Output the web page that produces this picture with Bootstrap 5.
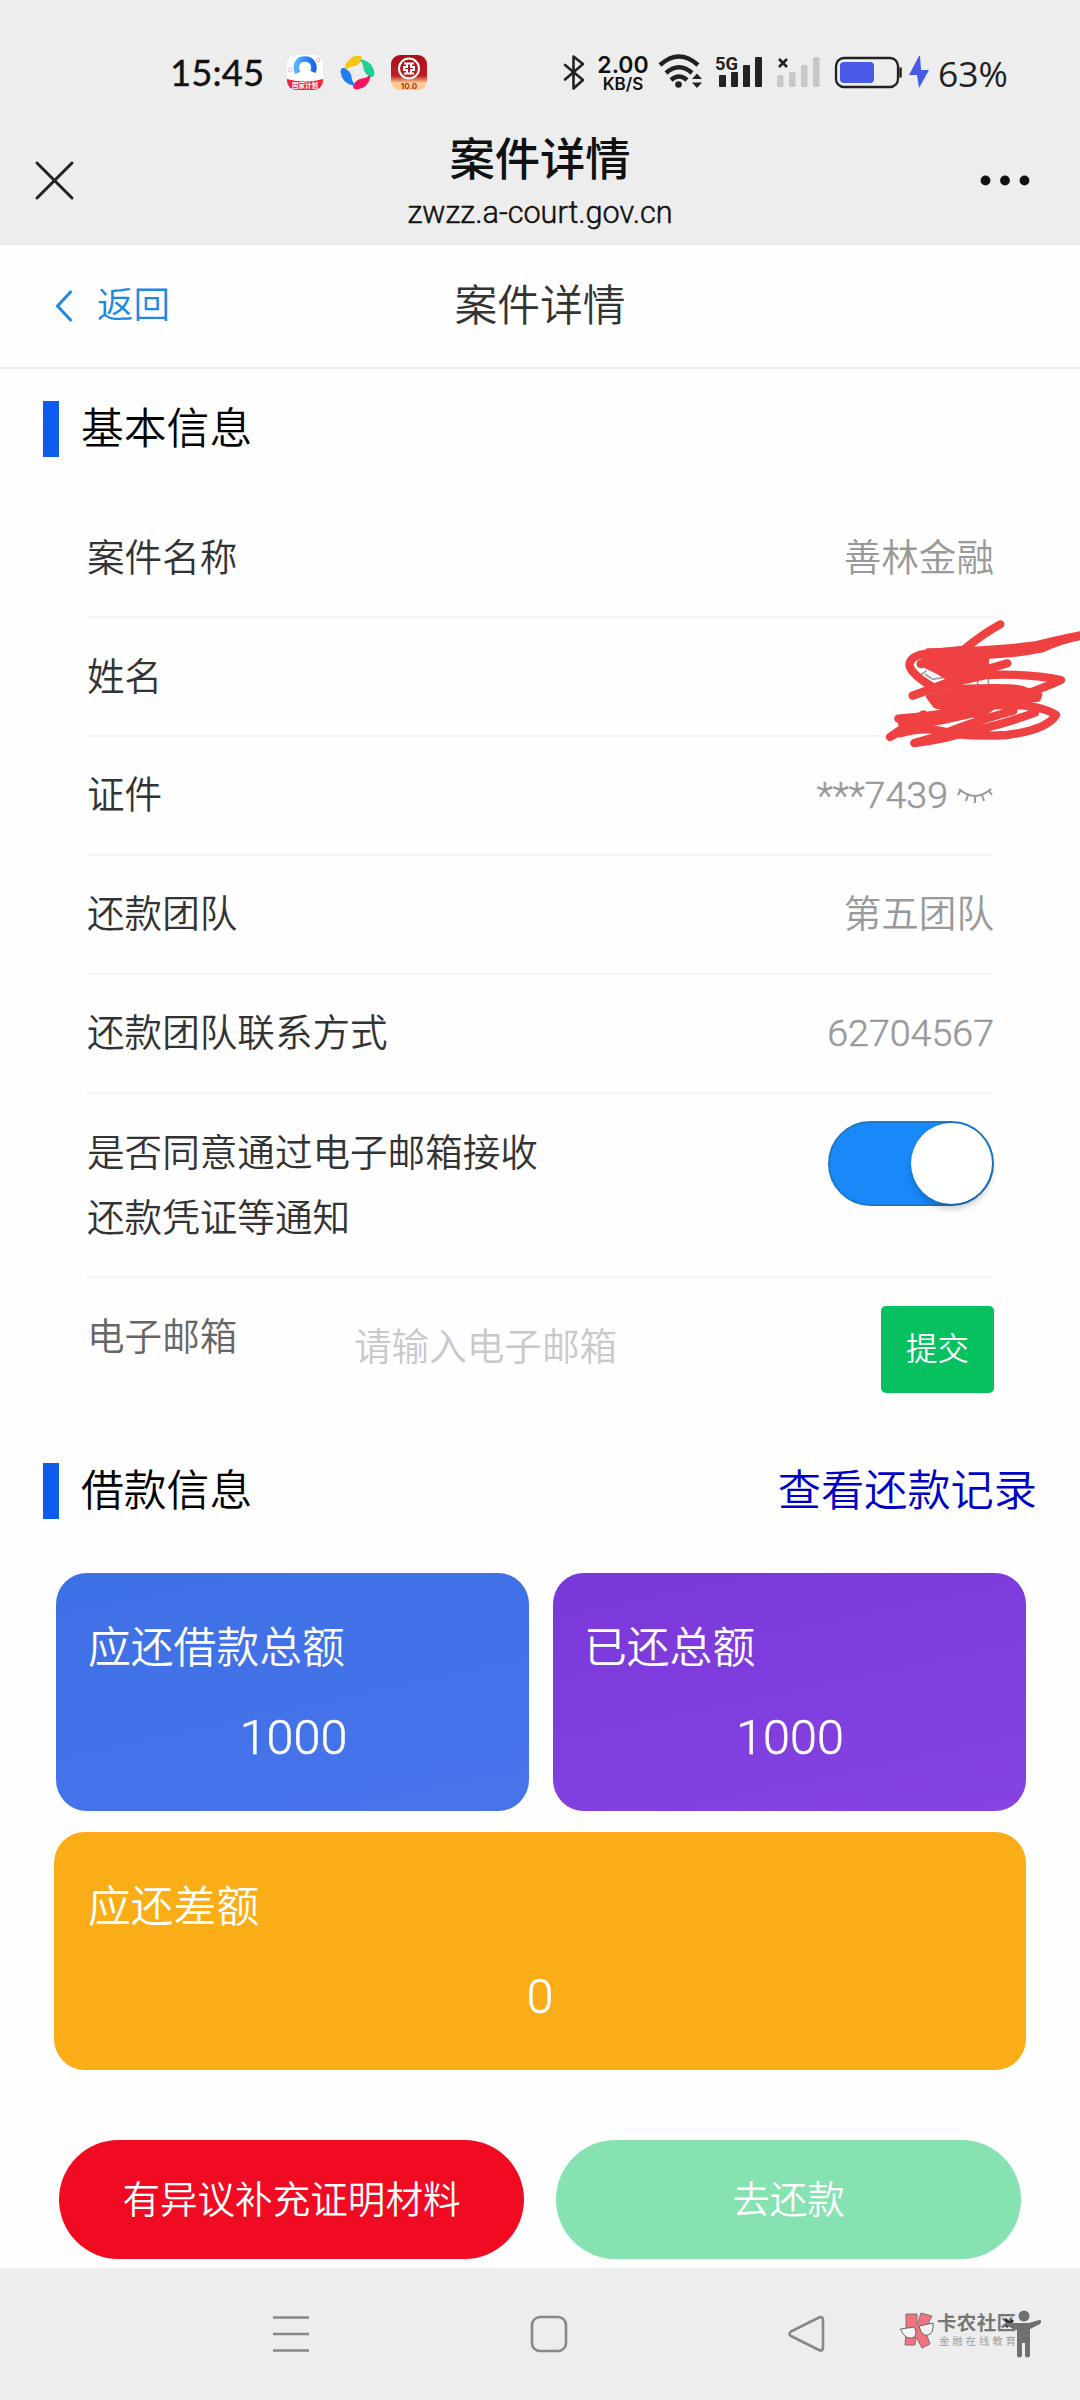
<!DOCTYPE html>
<html lang="zh-CN">
<head>
<meta charset="utf-8">
<meta name="viewport" content="width=device-width, initial-scale=1">
<title>案件详情</title>
<link href="https://cdn.jsdelivr.net/npm/bootstrap@5.3.0/dist/css/bootstrap.min.css" rel="stylesheet">
<style>
body{width:1080px;height:2400px;overflow:hidden;background:#fefefe;color:#333;font-family:"Liberation Sans","Noto Sans CJK SC",sans-serif;font-weight:350;font-size:37.6px;line-height:1.5}
svg{display:block;flex:none}
.cjk{font-family:"Noto Sans CJK SC",sans-serif}
.digits{font-family:Roboto,"Liberation Sans",sans-serif;font-weight:300;-webkit-text-stroke:.5px currentColor}
.status-bar{height:116px;background:#ededed;padding:28px 68px 0 170px}
.clock{font:400 36.5px/88px Lato,sans-serif;color:#111;letter-spacing:.1px;width:117px;-webkit-text-stroke:.4px #111}
.net-speed{font:600 23px/20px Inter,sans-serif;color:#111;width:56px;padding-top:27px}
.net-speed small{font-size:17px;font-weight:600;line-height:18px;display:block}
.battery-num{font:400 35.5px/91px "Open Sans",sans-serif;color:#222}
.chat-bar{height:129px;background:#ededed;padding:0 50px 0 34px}
.chat-title{font-size:45.3px;line-height:60px;font-weight:500;color:#111;padding-top:10px}
.chat-url{font-size:30.6px;line-height:36px;color:#111;margin-top:9px}
.page-bar{height:124px;border-bottom:2px solid #ededed;padding:0 55px}
.side{width:200px}
.back{color:#1e88e5;font-size:36.5px;gap:24px}
.page-title{font-size:42.8px;color:#333}
.sec{height:118px;padding:2px 43px 0;color:#000;font-size:42.8px}
.sec-mark{width:16px;height:56px;background:#0e5bef;margin-right:22px}
.sec a{color:#0000c4;text-decoration:none;font-size:43.2px}
.info{padding:13px 86px 0 87px}
.info-row{height:118.8px;border-bottom:2px solid #f5f5f5}
.val{color:#999}
.agree{height:184px;border-bottom:2px solid #f5f5f5;line-height:65px;padding-top:27px}
.toggle-on{width:166px;height:85px;border-radius:43px;background:#1989fa;border:2px solid #1a78c8;padding:0}
.toggle-on span{width:81px;height:81px;border-radius:50%;background:#fff;box-shadow:0 5px 6px rgba(0,0,0,.2)}
.mail{height:154px;padding-top:28px}
.mail-label{color:#666;width:267px;padding-top:3px}
.ph{background:none;border:0;padding:0;color:#333;margin-top:-2px;width:500px;height:86px;font-weight:350;line-height:86px}
.ph::placeholder{color:#c8c9cc;opacity:1}
.send{width:113px;height:87px;background:#07c160;border-radius:5px;color:#fff;font-size:31.5px;font-weight:350;padding:2px 0 0;border:0}
.tiles{padding:24px 54px 0;row-gap:21px}
.tile{height:238px;border-radius:31px;color:#fff;padding:43px 34px 0}
.tile .cap{font-size:42.8px;line-height:64px}
.tile .num{font-size:48.5px;line-height:60px;margin-top:28px;text-align:center}
.blue{width:473px;background:linear-gradient(168deg,#3e70e6,#4874ea);margin-left:2px;padding-left:32px}
.purple{width:473px;background:linear-gradient(168deg,#7a38d9,#8643e2);padding-left:31px}
.blue .num,.purple .num{padding-left:4px}
.orange{width:972px;background:#fbad17}
.acts{padding:70px 59px 0;gap:32px;height:198px}
.act{height:119px;border-radius:60px;color:#fff;font-size:37.6px;font-weight:350;border:0;flex:1;padding:0}
.act-red{background:#f00a22}.act-green{background:#86e2b0}
.sys{height:132px;background:#ededed;padding:47px 36px 0 272px}
.over{position:absolute;left:780px;top:600px;pointer-events:none}
</style>
<script src="https://cdn.jsdelivr.net/npm/bootstrap@5.3.0/dist/js/bootstrap.bundle.min.js"></script>
</head>
<body class="d-flex flex-column position-relative">
<header class="status-bar d-flex align-items-start">
  <div class="clock">15:45</div>
  <svg width="146" height="88" viewBox="0 0 146 88">
    <defs><linearGradient id="g1" x1="0" x2="1"><stop offset="0" stop-color="#55b4ff"/><stop offset="1" stop-color="#1769ee"/></linearGradient>
    <linearGradient id="g2" x2="0" y2="1"><stop offset="0" stop-color="#a90c1b"/><stop offset=".6" stop-color="#c02020"/><stop offset=".8" stop-color="#fbd09a"/><stop offset="1" stop-color="#ffc77f"/></linearGradient>
    <clipPath id="c1"><rect y="27" width="36" height="35" rx="9"/></clipPath></defs>
    <g clip-path="url(#c1)"><rect y="27" width="36" height="35" fill="#fff"/><path d="M0 51Q18 56 36 51V62H0Z" fill="#ed2936"/></g>
    <path d="M10.500 45C7 35 12 31 18 31S29 36 26 44" fill="none" stroke="url(#g1)" stroke-width="5.500"/>
    <circle cx="3" cy="42" r="2" fill="none" stroke="#f9b5d5"/><circle cx="31" cy="32" r="2" fill="none" stroke="#f9b5d5"/>
    <text x="18" y="60" text-anchor="middle" font-size="6.500" font-weight="700" fill="#fff" class="cjk">国家计划</text>
    <path d="M57.500 40Q60 29 71 27.500Q77 28 74 33Q71 38 66 38.500Q61 39 58.500 42Z" fill="#f8c713"/>
    <path d="M57.500 40Q60 29 71 27.500Q77 28 74 33Q71 38 66 38.500Q61 39 58.500 42Z" fill="#20d38d" transform="rotate(90 70.500 44.500)"/>
    <path d="M57.500 40Q60 29 71 27.500Q77 28 74 33Q71 38 66 38.500Q61 39 58.500 42Z" fill="#f6145f" transform="rotate(180 70.500 44.500)"/>
    <path d="M57.500 40Q60 29 71 27.500Q77 28 74 33Q71 38 66 38.500Q61 39 58.500 42Z" fill="#1d7ff2" transform="rotate(270 70.500 44.500)"/>
    <rect x="104" y="27" width="36" height="35" rx="9" fill="url(#g2)"/>
    <circle cx="122" cy="40.500" r="10" fill="none" stroke="#fff" stroke-width="2"/><path d="M117 35.500h10M117 45.500h10M120 35.500v3.500h-3v3h3v3.500M124 35.500v3.500h3v3h-3v3.500" fill="none" stroke="#fff" stroke-width="2"/>
    <text x="122" y="61" text-anchor="middle" font-size="8" font-weight="700" fill="#b13a1d" font-family="Inter">10.0</text>
  </svg>
  <svg width="162" height="88" viewBox="0 0 162 88"><path d="M132 37l18 15-9.500 8.500V28.500L150 36l-18 15.500" fill="none" stroke="#222" stroke-width="2.600" stroke-linejoin="round" stroke-linecap="round"/></svg>
  <div class="net-speed text-center">2.00<small>KB/S</small></div>
  <svg width="287" height="88" viewBox="651 28 287 88">
    <g fill="none" stroke="#222" stroke-width="4.500"><path d="M660 65Q679 48 698 65"/><path d="M666 73Q679 61.500 692 73"/><path d="M671 80Q679 73 687 80"/></g><circle cx="678.500" cy="84.500" r="3.300" fill="#222"/>
    <path d="M692 79l5-5.500 5 5.500zM692 82.500h10l-5 5.500z" fill="#222"/>
    <g fill="#222"><rect x="719" y="75" width="7" height="12" rx="1"/><rect x="731" y="72" width="7" height="15" rx="1"/><rect x="743" y="65" width="7" height="22" rx="1"/><rect x="755" y="57" width="7" height="30" rx="1"/></g>
    <text x="715" y="69.500" font-family="Roboto" font-weight="700" font-size="19" fill="#222" textLength="23" lengthAdjust="spacingAndGlyphs">5G</text>
    <path d="M779 59l8 8M787 59l-8 8" stroke="#222" stroke-width="2.600"/>
    <g fill="#c8c8c8"><rect x="777" y="75" width="6.500" height="12" rx="1.500"/><rect x="789" y="72" width="6.500" height="15" rx="1.500"/><rect x="801" y="65" width="6.500" height="22" rx="1.500"/><rect x="813" y="57" width="6.500" height="30" rx="1.500"/></g>
    <rect x="836" y="58" width="62" height="29" rx="8" fill="none" stroke="#222" stroke-width="2.300"/><rect x="840" y="62" width="34" height="21" rx="4" fill="#4a5ae8"/><path d="M900.500 67.500v10" stroke="#222" stroke-width="2.500"/>
    <path d="M919 56l-10 19h8l2 13 10-18h-8l-1-14z" fill="#4a5ae8"/>
  </svg>
  <div class="battery-num">63%</div>
</header>
<div class="chat-bar d-flex align-items-start justify-content-between">
  <svg width="66" height="129" viewBox="34 0 66 129"><path d="M37 47l35 35M72 47L37 82" stroke="#222" stroke-width="3" stroke-linecap="round"/></svg>
  <div class="text-center"><div class="chat-title cjk">案件详情</div><div class="chat-url digits">zwzz.a-court.gov.cn</div></div>
  <svg width="50" height="129" viewBox="980 0 50 129"><g fill="#111"><circle cx="985.500" cy="64.500" r="4.900"/><circle cx="1005" cy="64.500" r="4.900"/><circle cx="1024.500" cy="64.500" r="4.900"/></g></svg>
</div>
<nav class="page-bar d-flex align-items-center justify-content-between">
  <div class="side back d-flex align-items-center"><svg width="18" height="34" viewBox="0 0 18 34"><path d="M16.500 2L2.500 17l14 15" fill="none" stroke="#1e88e5" stroke-width="3"/></svg>返回</div>
  <div class="page-title">案件详情</div><div class="side"></div>
</nav>
<div class="sec d-flex align-items-center"><span class="sec-mark"></span>基本信息</div>
<main class="info">
  <div class="info-row d-flex align-items-center justify-content-between"><span>案件名称</span><span class="val">善林金融</span></div>
  <div class="info-row d-flex align-items-center justify-content-between"><span>姓名</span></div>
  <div class="info-row d-flex align-items-center justify-content-between"><span>证件</span><span class="val digits d-flex align-items-center gap-2">***7439<svg width="38" height="20" viewBox="0 0 38 20"><path d="M3 3Q19 17 35 3M4 5L2 9M12 9l-2 6M19 11v6M26 9l2 6M33 5l3 4" fill="none" stroke="#999" stroke-width="2"/></svg></span></div>
  <div class="info-row d-flex align-items-center justify-content-between"><span>还款团队</span><span class="val">第五团队</span></div>
  <div class="info-row d-flex align-items-center justify-content-between"><span>还款团队联系方式</span><span class="val digits">62704567</span></div>
  <div class="agree d-flex align-items-start justify-content-between"><div>是否同意通过电子邮箱接收<br>还款凭证等通知</div><button class="toggle-on d-flex justify-content-end" type="button" role="switch" aria-checked="true" aria-label="通知"><span></span></button></div>
  <div class="mail d-flex align-items-start"><span class="mail-label">电子邮箱</span><input class="ph" placeholder="请输入电子邮箱"><button class="send ms-auto" type="button">提交</button></div>
</main>
<div class="sec d-flex align-items-center"><span class="sec-mark"></span>借款信息<a class="ms-auto" href="#">查看还款记录</a></div>
<section class="tiles d-flex flex-wrap justify-content-between">
  <div class="tile blue"><div class="cap">应还借款总额</div><div class="num digits">1000</div></div>
  <div class="tile purple"><div class="cap">已还总额</div><div class="num digits">1000</div></div>
  <div class="tile orange"><div class="cap">应还差额</div><div class="num digits">0</div></div>
</section>
<div class="acts d-flex"><button class="act act-red" type="button">有异议补充证明材料</button><button class="act act-green" type="button">去还款</button></div>
<footer class="sys d-flex align-items-start">
  <svg width="628" height="38" viewBox="272 2315 628 38"><g fill="none" stroke="#888" stroke-width="2.600"><path d="M273 2317.500h36M273 2334h36M273 2350.500h36"/><rect x="532" y="2317" width="34" height="34" rx="8"/><path d="M791 2331.500L819 2317.500Q823 2316 823 2320V2347Q823 2352 819 2350L791 2336Q788 2334 791 2331.500Z"/></g></svg>
  <svg class="overflow-visible" width="144" height="60" viewBox="900 2315 144 60">
    <path d="M906 2314h11v11l4-12 11 3-7 14 5 14-8 4-6-11-1 8h-10l1-14z" fill="#f2737d" stroke="#777" stroke-width="1"/>
    <path d="M900.500 2329l14-2q4 10-3 11t-11-9zM919 2326l14-3q1 10-5 12t-9-9z" fill="#f5f5f5" stroke="#666"/>
    <text class="cjk" x="937" y="2330" font-size="19.500" font-weight="700" fill="#777" textLength="79">卡农社区</text>
    <text class="cjk" x="939" y="2345" font-size="10.500" fill="#999" textLength="77">金融在线教育</text>
    <path d="M1005 2319l9 9M1013 2320l-7 7" stroke="#333" stroke-width="3"/>
    <circle cx="1024" cy="2316" r="5.500" fill="#707070"/><path d="M1009 2323q-4-2-2 3l10 4v26q2 3 5 0v-13h3v13q3 3 5 0v-27l10-5q3-4-1-4l-10 3h-12z" fill="#707070"/>
  </svg>
</footer>
<svg class="over" width="300" height="220" viewBox="0 0 900 660">
  <path d="M420 226l20-14M435 222l20 14M455 238l38-6M593 230v30M625 178v82" stroke="#999" stroke-width="5" fill="none"/>
  <g fill="none" stroke="#ef4141" stroke-width="25" stroke-linecap="round" stroke-linejoin="round">
  <path d="M661 73Q610 100 550 150L445 160Q390 165 388 196Q395 225 460 262M422 192Q460 178 500 175"/>
  <path d="M440 145Q640 140 765 124Q830 107 920 90L920 118Q860 125 790 157Q720 172 628 176L625 200L500 240L470 222L415 195Z" fill="#ef4141" stroke="none"/>
  <path d="M682 190L560 226 398 287Q500 250 620 225Q750 220 843 240Q800 260 730 285"/>
  <path d="M445 290L540 262Q680 255 725 264L780 285 775 298 650 315 600 350 465 318Z" fill="#ef4141" stroke-width="14"/>
  <path d="M355 356Q480 345 590 325M430 343L330 411Q400 370 480 362L600 335"/>
  <path d="M360 362l70-8-10 22-50 24z" fill="#ef4141" stroke-width="16"/>
  <path d="M620 318Q770 305 828 345Q800 390 680 405Q600 410 530 402Q650 380 765 338M700 332Q560 370 470 410L403 429Q500 418 570 392M360 400Q440 375 520 402"/>
  </g>
</svg>
</body>
</html>
